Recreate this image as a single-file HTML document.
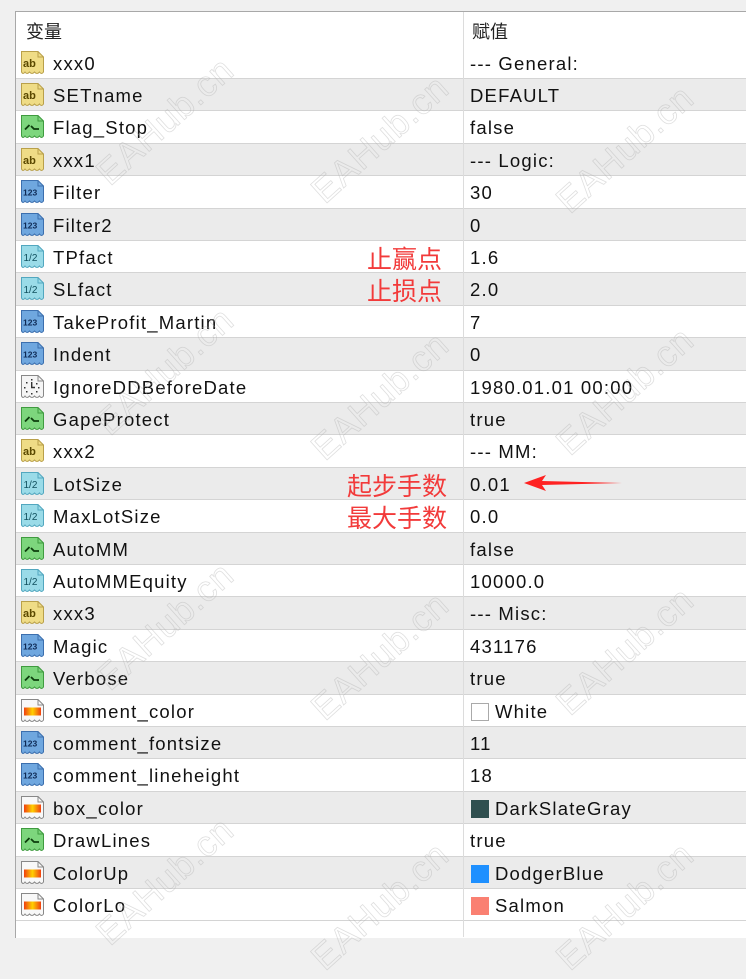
<!DOCTYPE html>
<html><head><meta charset="utf-8">
<style>
html,body{margin:0;padding:0}
body{width:746px;height:937px;background:#f0f0f0;position:relative;overflow:hidden;font-family:"Liberation Sans","Noto Sans CJK SC",sans-serif;color:#111}
#tbl{position:absolute;left:15px;top:11px;width:731px;height:926px;background:#fff;border-left:1px solid #a8a8a8;border-top:1px solid #a8a8a8}
.hd{position:absolute;top:12px;height:35px;line-height:38px;font-size:18px;font-family:"Noto Sans CJK SC",sans-serif;color:#222}
.row{position:absolute;left:16px;width:730px;height:32.4px;border-bottom:1px solid #d4d4d4;box-sizing:border-box}
.g{background:#ebebeb}
.nm{position:absolute;left:37px;top:1px;line-height:32px;font-size:18.5px;letter-spacing:1.2px;white-space:nowrap}
.vl{position:absolute;left:454px;top:1px;line-height:32px;font-size:18.5px;letter-spacing:1.2px;white-space:nowrap}
.ic{position:absolute;left:3px;top:3px;width:27px;height:27px}
#div{position:absolute;left:463px;top:12px;width:1px;height:925px;background:#dcdcdc}
.sw{display:inline-block;width:18px;height:18px;vertical-align:-3px;margin-right:6px;box-sizing:border-box;margin-left:1px}
.red{position:absolute;color:#f23a3a;font-size:25px;font-family:"Noto Sans CJK SC",sans-serif;line-height:32px}
.wm{position:absolute;font-size:36px;color:rgba(255,255,255,0);-webkit-text-stroke:0.8px rgba(175,175,175,0.4);transform:rotate(-42deg);white-space:nowrap;font-family:"Liberation Sans",sans-serif;letter-spacing:1px}
</style></head><body>
<svg width="0" height="0" style="position:absolute">
<defs>
<linearGradient id="cg" x1="0" y1="0" x2="1" y2="0"><stop offset="0" stop-color="#f04010"/><stop offset="0.5" stop-color="#ffd000"/><stop offset="1" stop-color="#f04010"/></linearGradient>
<symbol id="ab" viewBox="0 0 27 27"><path d="M2.5,1.5 H19 L24.5,7 V22 Q22.5,25 20.5,22 Q18,25 15.5,22 Q13,25 10.5,22 Q8,25 6,22 Q4,25 2.5,22 Z" fill="#efdc86" stroke="#b9a04a"/><path d="M19,1.5 V7 H24.5" fill="none" stroke="#b9a04a"/><text x="4" y="17" font-size="11" font-family="Liberation Sans" font-weight="bold" fill="#5a4800">ab</text></symbol>
<symbol id="bo" viewBox="0 0 27 27"><path d="M2.5,1.5 H19 L24.5,7 V22 Q22.5,25 20.5,22 Q18,25 15.5,22 Q13,25 10.5,22 Q8,25 6,22 Q4,25 2.5,22 Z" fill="#7dd67d" stroke="#3f9b3f"/><path d="M19,1.5 V7 H24.5" fill="none" stroke="#3f9b3f"/><path d="M6,15.5 L10.5,11 M12,12 L15,15 H20" fill="none" stroke="#0d3d0d" stroke-width="1.8"/></symbol>
<symbol id="in" viewBox="0 0 27 27"><path d="M2.5,1.5 H19 L24.5,7 V22 Q22.5,25 20.5,22 Q18,25 15.5,22 Q13,25 10.5,22 Q8,25 6,22 Q4,25 2.5,22 Z" fill="#6fa7df" stroke="#3c6fae"/><path d="M19,1.5 V7 H24.5" fill="none" stroke="#3c6fae"/><text x="4" y="16.5" font-size="8.5" font-family="Liberation Sans" font-weight="bold" fill="#0e2a55">123</text></symbol>
<symbol id="db" viewBox="0 0 27 27"><path d="M2.5,1.5 H19 L24.5,7 V22 Q22.5,25 20.5,22 Q18,25 15.5,22 Q13,25 10.5,22 Q8,25 6,22 Q4,25 2.5,22 Z" fill="#9adbe8" stroke="#52a7bf"/><path d="M19,1.5 V7 H24.5" fill="none" stroke="#52a7bf"/><text x="4.5" y="17" font-size="10" font-family="Liberation Sans" fill="#11505e">1/2</text></symbol>
<symbol id="dt" viewBox="0 0 27 27"><path d="M2.5,1.5 H19 L24.5,7 V22 Q22.5,25 20.5,22 Q18,25 15.5,22 Q13,25 10.5,22 Q8,25 6,22 Q4,25 2.5,22 Z" fill="#f5f5f5" stroke="#888"/><path d="M19,1.5 V7 H24.5" fill="none" stroke="#888"/><g fill="#333"><rect x="12" y="5" width="1.5" height="1.5"/><rect x="7" y="8" width="1.5" height="1.5"/><rect x="17" y="9" width="1.5" height="1.5"/><rect x="5" y="13" width="1.5" height="1.5"/><rect x="19" y="13" width="1.5" height="1.5"/><rect x="7" y="17" width="1.5" height="1.5"/><rect x="17" y="17" width="1.5" height="1.5"/><rect x="12" y="19" width="1.5" height="1.5"/><path d="M12.7,8 V13.5 H16" fill="none" stroke="#333" stroke-width="1.4"/></g></symbol>
<symbol id="co" viewBox="0 0 27 27"><path d="M2.5,1.5 H19 L24.5,7 V22 Q22.5,25 20.5,22 Q18,25 15.5,22 Q13,25 10.5,22 Q8,25 6,22 Q4,25 2.5,22 Z" fill="#f8f8f8" stroke="#888"/><path d="M19,1.5 V7 H24.5" fill="none" stroke="#888"/><rect x="5" y="9.5" width="17" height="8" fill="url(#cg)"/></symbol>
</defs></svg>
<div id="tbl"></div>
<div class="hd" style="left:26px">变量</div>
<div class="hd" style="left:472px">赋值</div>

<div class="row" style="top:46.6px"><svg class="ic"><use href="#ab"/></svg><span class="nm">xxx0</span><span class="vl">--- General:</span></div>
<div class="row g" style="top:79px"><svg class="ic"><use href="#ab"/></svg><span class="nm">SETname</span><span class="vl">DEFAULT</span></div>
<div class="row" style="top:111.4px"><svg class="ic"><use href="#bo"/></svg><span class="nm">Flag_Stop</span><span class="vl">false</span></div>
<div class="row g" style="top:143.8px"><svg class="ic"><use href="#ab"/></svg><span class="nm">xxx1</span><span class="vl">--- Logic:</span></div>
<div class="row" style="top:176.2px"><svg class="ic"><use href="#in"/></svg><span class="nm">Filter</span><span class="vl">30</span></div>
<div class="row g" style="top:208.6px"><svg class="ic"><use href="#in"/></svg><span class="nm">Filter2</span><span class="vl">0</span></div>
<div class="row" style="top:241px"><svg class="ic"><use href="#db"/></svg><span class="nm">TPfact</span><span class="vl">1.6</span></div>
<div class="row g" style="top:273.4px"><svg class="ic"><use href="#db"/></svg><span class="nm">SLfact</span><span class="vl">2.0</span></div>
<div class="row" style="top:305.8px"><svg class="ic"><use href="#in"/></svg><span class="nm">TakeProfit_Martin</span><span class="vl">7</span></div>
<div class="row g" style="top:338.2px"><svg class="ic"><use href="#in"/></svg><span class="nm">Indent</span><span class="vl">0</span></div>
<div class="row" style="top:370.6px"><svg class="ic"><use href="#dt"/></svg><span class="nm">IgnoreDDBeforeDate</span><span class="vl">1980.01.01 00:00</span></div>
<div class="row g" style="top:403px"><svg class="ic"><use href="#bo"/></svg><span class="nm">GapeProtect</span><span class="vl">true</span></div>
<div class="row" style="top:435.4px"><svg class="ic"><use href="#ab"/></svg><span class="nm">xxx2</span><span class="vl">--- MM:</span></div>
<div class="row g" style="top:467.8px"><svg class="ic"><use href="#db"/></svg><span class="nm">LotSize</span><span class="vl">0.01</span></div>
<div class="row" style="top:500.2px"><svg class="ic"><use href="#db"/></svg><span class="nm">MaxLotSize</span><span class="vl">0.0</span></div>
<div class="row g" style="top:532.6px"><svg class="ic"><use href="#bo"/></svg><span class="nm">AutoMM</span><span class="vl">false</span></div>
<div class="row" style="top:565px"><svg class="ic"><use href="#db"/></svg><span class="nm">AutoMMEquity</span><span class="vl">10000.0</span></div>
<div class="row g" style="top:597.4px"><svg class="ic"><use href="#ab"/></svg><span class="nm">xxx3</span><span class="vl">--- Misc:</span></div>
<div class="row" style="top:629.8px"><svg class="ic"><use href="#in"/></svg><span class="nm">Magic</span><span class="vl">431176</span></div>
<div class="row g" style="top:662.2px"><svg class="ic"><use href="#bo"/></svg><span class="nm">Verbose</span><span class="vl">true</span></div>
<div class="row" style="top:694.6px"><svg class="ic"><use href="#co"/></svg><span class="nm">comment_color</span><span class="vl"><span class="sw" style="background:#fff;border:1px solid #aaa"></span>White</span></div>
<div class="row g" style="top:727px"><svg class="ic"><use href="#in"/></svg><span class="nm">comment_fontsize</span><span class="vl">11</span></div>
<div class="row" style="top:759.4px"><svg class="ic"><use href="#in"/></svg><span class="nm">comment_lineheight</span><span class="vl">18</span></div>
<div class="row g" style="top:791.8px"><svg class="ic"><use href="#co"/></svg><span class="nm">box_color</span><span class="vl"><span class="sw" style="background:#2f4f4f"></span>DarkSlateGray</span></div>
<div class="row" style="top:824.2px"><svg class="ic"><use href="#bo"/></svg><span class="nm">DrawLines</span><span class="vl">true</span></div>
<div class="row g" style="top:856.6px"><svg class="ic"><use href="#co"/></svg><span class="nm">ColorUp</span><span class="vl"><span class="sw" style="background:#1e90ff"></span>DodgerBlue</span></div>
<div class="row" style="top:889px"><svg class="ic"><use href="#co"/></svg><span class="nm">ColorLo</span><span class="vl"><span class="sw" style="background:#fa8072"></span>Salmon</span></div>
<div id="div"></div>

<div class="red" style="left:367px;top:242px">止赢点</div>
<div class="red" style="left:367px;top:274.4px">止损点</div>
<div class="red" style="left:347px;top:468.8px">起步手数</div>
<div class="red" style="left:347px;top:501.2px">最大手数</div>
<svg style="position:absolute;left:520px;top:472px" width="105" height="22"><path d="M4,11 L26,3 L22,9 L102,11 L22,13 L26,19 Z" fill="#f22"/></svg>

<div class="wm" style="left:80px;top:100px">EAHub.cn</div>
<div class="wm" style="left:295px;top:118px">EAHub.cn</div>
<div class="wm" style="left:540px;top:128px">EAHub.cn</div>
<div class="wm" style="left:80px;top:350px">EAHub.cn</div>
<div class="wm" style="left:295px;top:375px">EAHub.cn</div>
<div class="wm" style="left:540px;top:370px">EAHub.cn</div>
<div class="wm" style="left:80px;top:605px">EAHub.cn</div>
<div class="wm" style="left:295px;top:635px">EAHub.cn</div>
<div class="wm" style="left:540px;top:630px">EAHub.cn</div>
<div class="wm" style="left:80px;top:860px">EAHub.cn</div>
<div class="wm" style="left:295px;top:885px">EAHub.cn</div>
<div class="wm" style="left:540px;top:885px">EAHub.cn</div>
</body></html>
